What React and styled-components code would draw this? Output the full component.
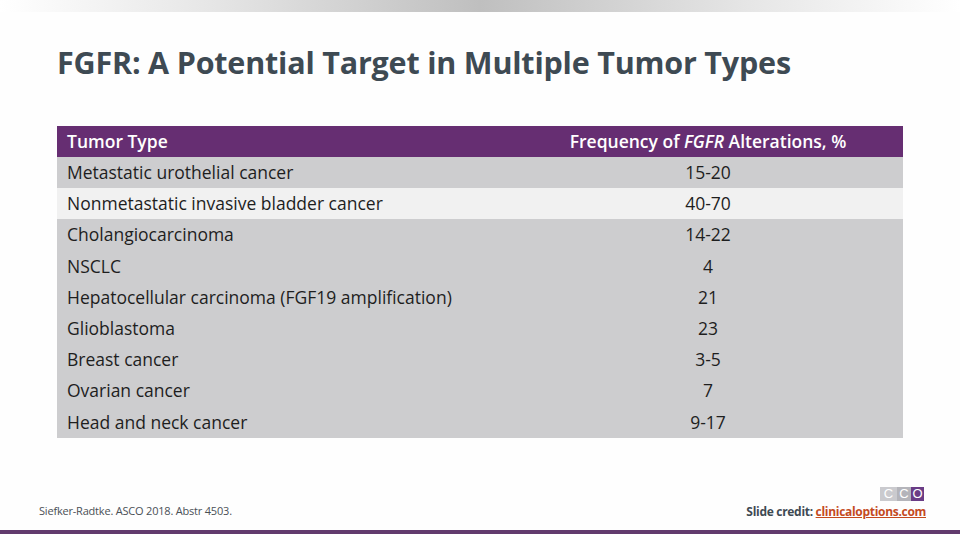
import React from 'react';
import styled, { createGlobalStyle } from 'styled-components';

const GlobalStyle = createGlobalStyle`
  html, body {
    margin: 0;
    padding: 0;
    background: #ffffff;
  }
  body {
    font-family: "Open Sans", "Liberation Sans", sans-serif;
  }
`

const Slide = styled.div`
  width: 960px;
  height: 540px;
  display: flex;
  flex-direction: column;
  background: #fefefe;
  overflow: hidden;
`

const TopBar = styled.div`
  height: 12px;
  flex-shrink: 0;
  background: linear-gradient(90deg, #ffffff 0%, #e6e6e6 22%, #bfbfbf 50%, #e6e6e6 78%, #ffffff 100%);
`

const Title = styled.h1`
  margin: 30px 0 0 57px;
  font-size: 30.5px;
  font-weight: 700;
  line-height: 40px;
  color: #3e4a53;
  letter-spacing: -0.2px;
`

const Table = styled.div`
  margin: 44px 0 0 57px;
  width: 846px;
  display: grid;
  grid-template-columns: 456px 1fr;
`

const HeadCell = styled.div`
  background: #662e72;
  color: #ffffff;
  font-size: 17.5px;
  font-weight: 600;
  height: 31px;
  line-height: 31px;
  padding-left: ${p => (p.center ? '0' : '10px')};
  text-align: ${p => (p.center ? 'center' : 'left')};
`

const Cell = styled.div`
  background: ${p => (p.light ? '#f1f1f1' : '#cdcdcf')};
  color: #1e1e1e;
  font-size: 17.5px;
  height: 31.2px;
  line-height: 31px;
  padding-left: ${p => (p.center ? '0' : '10px')};
  text-align: ${p => (p.center ? 'center' : 'left')};
  white-space: nowrap;
`

const Footer = styled.div`
  margin-top: auto;
  display: flex;
  justify-content: space-between;
  align-items: flex-end;
  padding: 0 34px 10px 39px;
`

const Citation = styled.div`
  font-size: 11px;
  color: #4a5056;
  letter-spacing: -0.2px;
  padding-bottom: 2px;
`

const Credit = styled.div`
  display: flex;
  flex-direction: column;
  align-items: flex-end;
  gap: 2px;
`

const Logo = styled.div`
  display: flex;
  height: 14px;
  margin-right: 2px;
`

const LogoBox = styled.span`
  display: flex;
  align-items: center;
  justify-content: center;
  width: ${p => p.w}px;
  background: ${p => p.bg};
  color: #ffffff;
  font-family: "Liberation Sans", sans-serif;
  font-size: 13px;
  line-height: 14px;
`

const CreditText = styled.div`
  font-size: 12px;
  font-weight: 700;
  color: #3e4a53;
  letter-spacing: -0.3px;
`

const CreditLink = styled.span`
  color: #c44a1e;
  text-decoration: underline;
`

const BottomRule = styled.div`
  height: 4px;
  flex-shrink: 0;
  background: #613a6d;
  margin-bottom: 6px;
`

const rows = [
  ['Metastatic urothelial cancer', '15-20'],
  ['Nonmetastatic invasive bladder cancer', '40-70', true],
  ['Cholangiocarcinoma', '14-22'],
  ['NSCLC', '4'],
  ['Hepatocellular carcinoma (FGF19 amplification)', '21'],
  ['Glioblastoma', '23'],
  ['Breast cancer', '3-5'],
  ['Ovarian cancer', '7'],
  ['Head and neck cancer', '9-17'],
];

export default function App() {
  return (
    <>
      <GlobalStyle />
      <Slide>
        <TopBar />
        <Title>FGFR: A Potential Target in Multiple Tumor Types</Title>
        <Table>
          <HeadCell>Tumor Type</HeadCell>
          <HeadCell center>
            Frequency of <i>FGFR</i> Alterations, %
          </HeadCell>
          {rows.map(([type, freq, light]) => (
            <React.Fragment key={type}>
              <Cell light={light}>{type}</Cell>
              <Cell light={light} center>{freq}</Cell>
            </React.Fragment>
          ))}
        </Table>
        <Footer>
          <Citation>Siefker-Radtke. ASCO 2018. Abstr 4503.</Citation>
          <Credit>
            <Logo>
              <LogoBox w={17} bg="#cacace">C</LogoBox>
              <LogoBox w={14} bg="#b4b4ba">C</LogoBox>
              <LogoBox w={13} bg="#6a3c86">O</LogoBox>
            </Logo>
            <CreditText>
              Slide credit: <CreditLink>clinicaloptions.com</CreditLink>
            </CreditText>
          </Credit>
        </Footer>
        <BottomRule />
      </Slide>
    </>
  );
}
